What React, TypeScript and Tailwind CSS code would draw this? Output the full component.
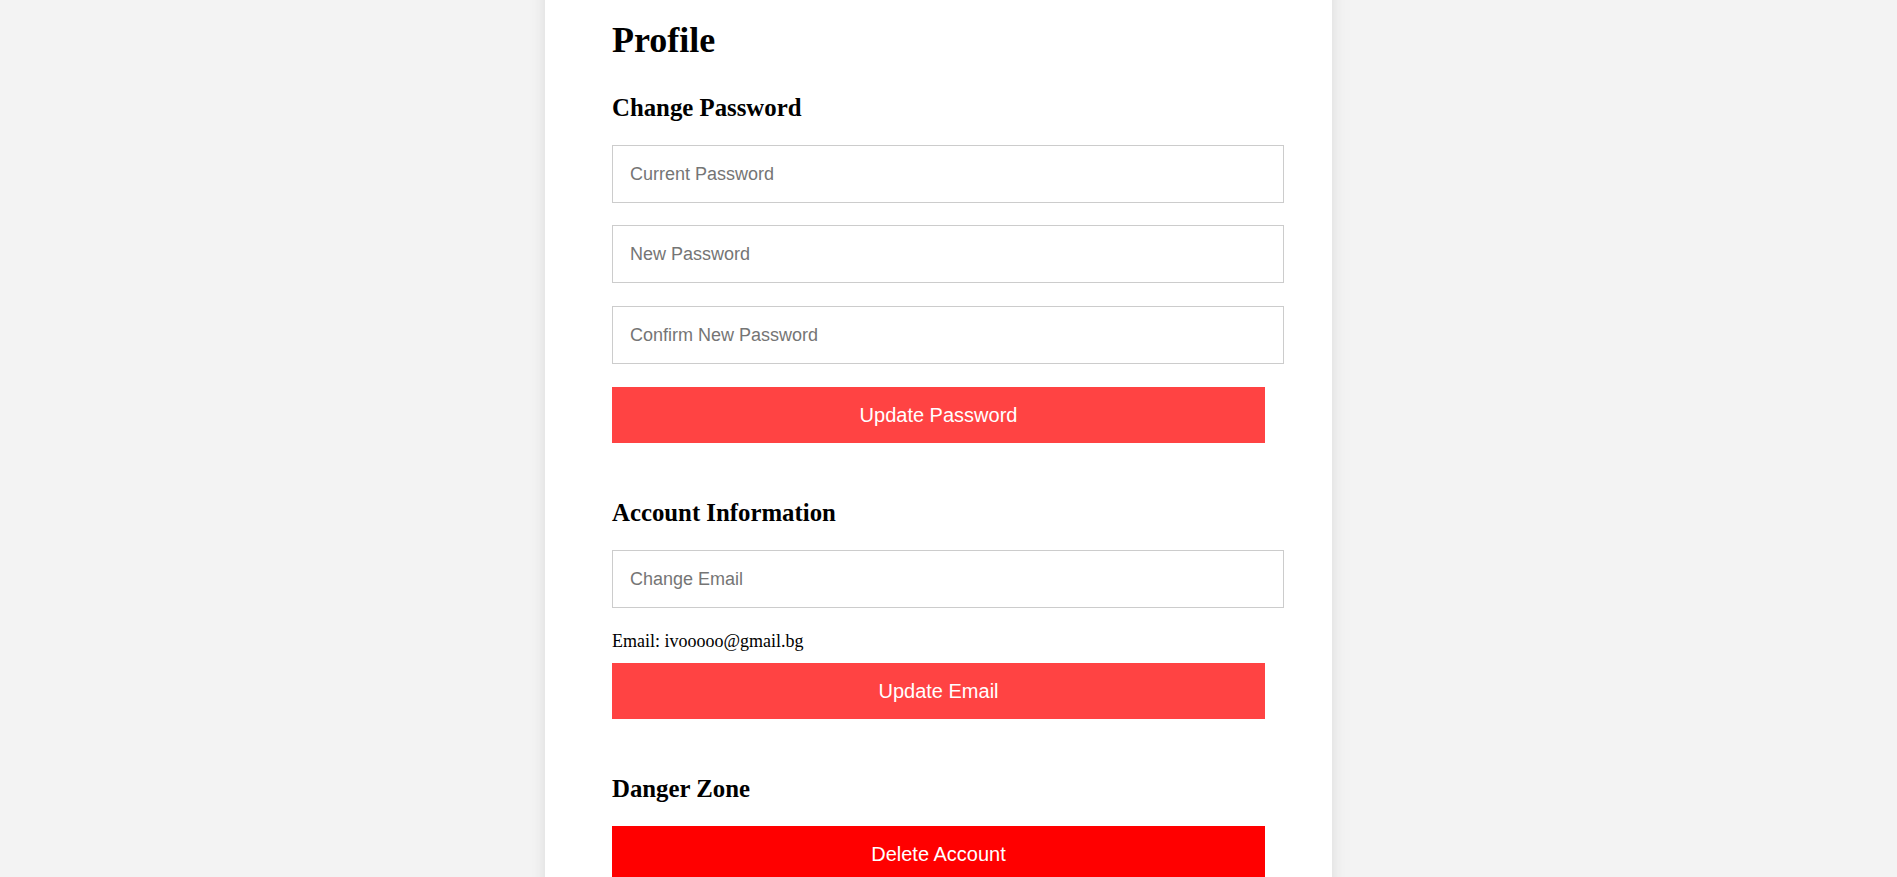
import { useEffect, useRef } from "react";

const inputCls =
  "block w-[672px] h-[58px] border border-[#cccccc] bg-white pl-[17px] text-[18px] text-black outline-none placeholder:text-[#757575] font-['Liberation_Sans',Arial,sans-serif]";
const btnCls =
  "flex items-center justify-center w-[653px] h-[56px] text-white text-[20px] font-['Liberation_Sans',Arial,sans-serif]";
const h2Cls =
  "text-[24.8px] leading-[24px] font-bold text-black font-['Liberation_Serif','Times_New_Roman',serif]";

export default function App() {
  const ref = useRef<HTMLDivElement>(null);
  useEffect(() => {
    if (ref.current) ref.current.scrollTop = 175;
  }, []);
  return (
    <div
      ref={ref}
      className="h-screen overflow-y-auto bg-[#f3f3f3] [&::-webkit-scrollbar]:w-[7px] [&::-webkit-scrollbar-track]:bg-[#f3f3f3] [&::-webkit-scrollbar-thumb]:bg-[#c1c1c1]"
    >
      <div className="ml-[545px] w-[787px] min-h-[1586px] bg-white shadow-[0_0_14px_rgba(0,0,0,0.1)] pl-[67px] pt-[197px]">
        <h1 className="text-[36px] leading-[36px] font-bold text-black font-['Liberation_Serif','Times_New_Roman',serif]">
          Profile
        </h1>

        <h2 className={`${h2Cls} mt-[38px]`}>Change Password</h2>
        <div className="mt-[25px] flex flex-col">
          <input type="password" placeholder="Current Password" className={inputCls} />
          <input type="password" placeholder="New Password" className={`${inputCls} mt-[22px]`} />
          <input type="password" placeholder="Confirm New Password" className={`${inputCls} mt-[23px]`} />
        </div>
        <button className={`${btnCls} mt-[23px] bg-[#ff4343]`}>Update Password</button>

        <h2 className={`${h2Cls} mt-[58px]`}>Account Information</h2>
        <input type="email" placeholder="Change Email" className={`${inputCls} mt-[25px]`} />
        <p className="mt-[24px] text-[18px] leading-[18px] text-black font-['Liberation_Serif','Times_New_Roman',serif]">
          Email: ivooooo@gmail.bg
        </p>
        <button className={`${btnCls} mt-[13px] bg-[#ff4343]`}>Update Email</button>

        <h2 className={`${h2Cls} mt-[58px]`}>Danger Zone</h2>
        <button className={`${btnCls} mt-[25px] bg-[#ff0000]`}>Delete Account</button>
      </div>
    </div>
  );
}
